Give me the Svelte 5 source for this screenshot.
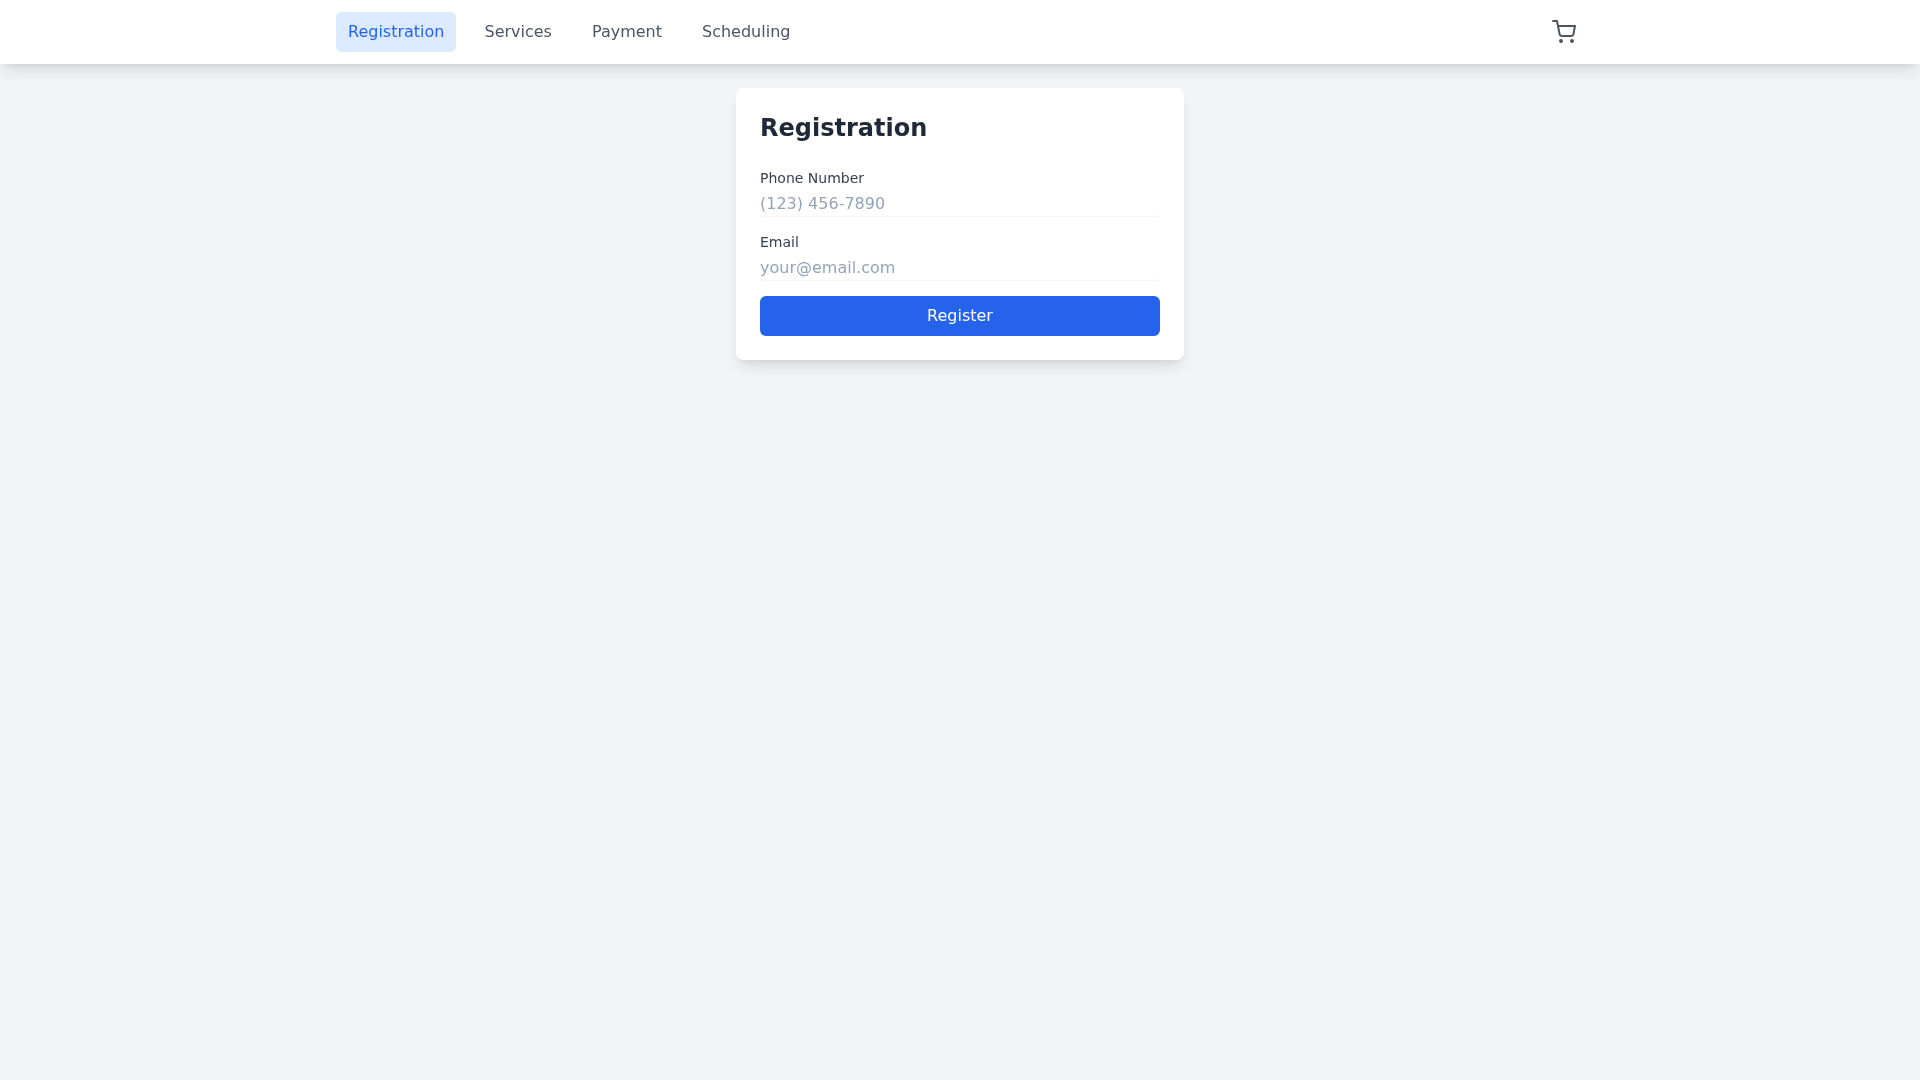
<script>
  const tabs = ['Registration', 'Services', 'Payment', 'Scheduling'];
</script>

<div class="page">
  <header class="header">
    <div class="bar">
      <nav class="nav">
        {#each tabs as tab, i}
          <button class="tab" class:active={i === 0}>{tab}</button>
        {/each}
      </nav>
      <button class="cart" aria-label="Cart">
        <svg width="24" height="24" viewBox="0 0 24 24" fill="none" stroke="currentColor" stroke-width="2" stroke-linecap="round" stroke-linejoin="round">
          <circle cx="9" cy="21" r="1" />
          <circle cx="20" cy="21" r="1" />
          <path d="M1 1h4l2.68 13.39a2 2 0 0 0 2 1.61h9.72a2 2 0 0 0 2-1.61L23 6H6" />
        </svg>
      </button>
    </div>
  </header>
  <main class="main">
    <form class="card">
      <h1 class="title">Registration</h1>
      <div class="field">
        <label class="label" for="phone">Phone Number</label>
        <input class="input" id="phone" type="tel" placeholder="(123) 456-7890" />
      </div>
      <div class="field">
        <label class="label" for="email">Email</label>
        <input class="input" id="email" type="email" placeholder="your@email.com" />
      </div>
      <button class="submit" type="button">Register</button>
    </form>
  </main>
</div>

<style>
  :global(body) {
    background: #f3f4f6;
    font-family: "DejaVu Sans", sans-serif;
  }
  .page {
    min-height: 100vh;
    background: #f3f4f6;
  }
  .header {
    background: #fff;
    box-shadow: 0 10px 15px -3px rgba(0, 0, 0, 0.1), 0 4px 6px -4px rgba(0, 0, 0, 0.1);
  }
  .bar {
    width: 1280px;
    margin: 0 auto;
    padding: 0 16px;
    box-sizing: border-box;
    height: 64px;
    display: flex;
    align-items: center;
    justify-content: space-between;
    will-change: transform;
  }
  .nav {
    display: flex;
    gap: 16px;
  }
  .tab {
    font: 16px/24px "DejaVu Sans", sans-serif;
    color: #4b5563;
    background: none;
    border: 0;
    border-radius: 6px;
    padding: 8px 12px;
  }
  .tab.active {
    background: #dbeafe;
    color: #2563eb;
  }
  .cart {
    display: flex;
    padding: 8px;
    border: 0;
    background: none;
    color: #4b5563;
  }
  .main {
    display: flex;
    justify-content: center;
    padding-top: 24px;
  }
  .card {
    width: 448px;
    box-sizing: border-box;
    padding: 24px;
    background: #fff;
    border-radius: 8px;
    box-shadow: 0 10px 15px -3px rgba(0, 0, 0, 0.1), 0 4px 6px -4px rgba(0, 0, 0, 0.1);
    will-change: transform;
  }
  .title {
    margin: 0 0 24px;
    font-size: 24px;
    line-height: 32px;
    font-weight: 700;
    color: #1f2937;
  }
  .field {
    margin-bottom: 16px;
  }
  .label {
    display: block;
    font-size: 14px;
    line-height: 20px;
    color: #374151;
  }
  .input {
    display: block;
    width: 100%;
    box-sizing: border-box;
    height: 25px;
    margin-top: 3px;
    padding: 0;
    border: 0;
    border-radius: 4px;
    box-shadow: 0 1px 0 #f3f4f6;
    outline: 0;
    font: 16px/24px "DejaVu Sans", sans-serif;
    color: #374151;
    background: #fff;
  }
  .input::placeholder {
    color: #94a3b8;
    opacity: 1;
  }
  .submit {
    display: block;
    width: 100%;
    height: 40px;
    border: 0;
    border-radius: 6px;
    background: #2563eb;
    color: #fff;
    font: 16px/24px "DejaVu Sans", sans-serif;
  }
</style>
